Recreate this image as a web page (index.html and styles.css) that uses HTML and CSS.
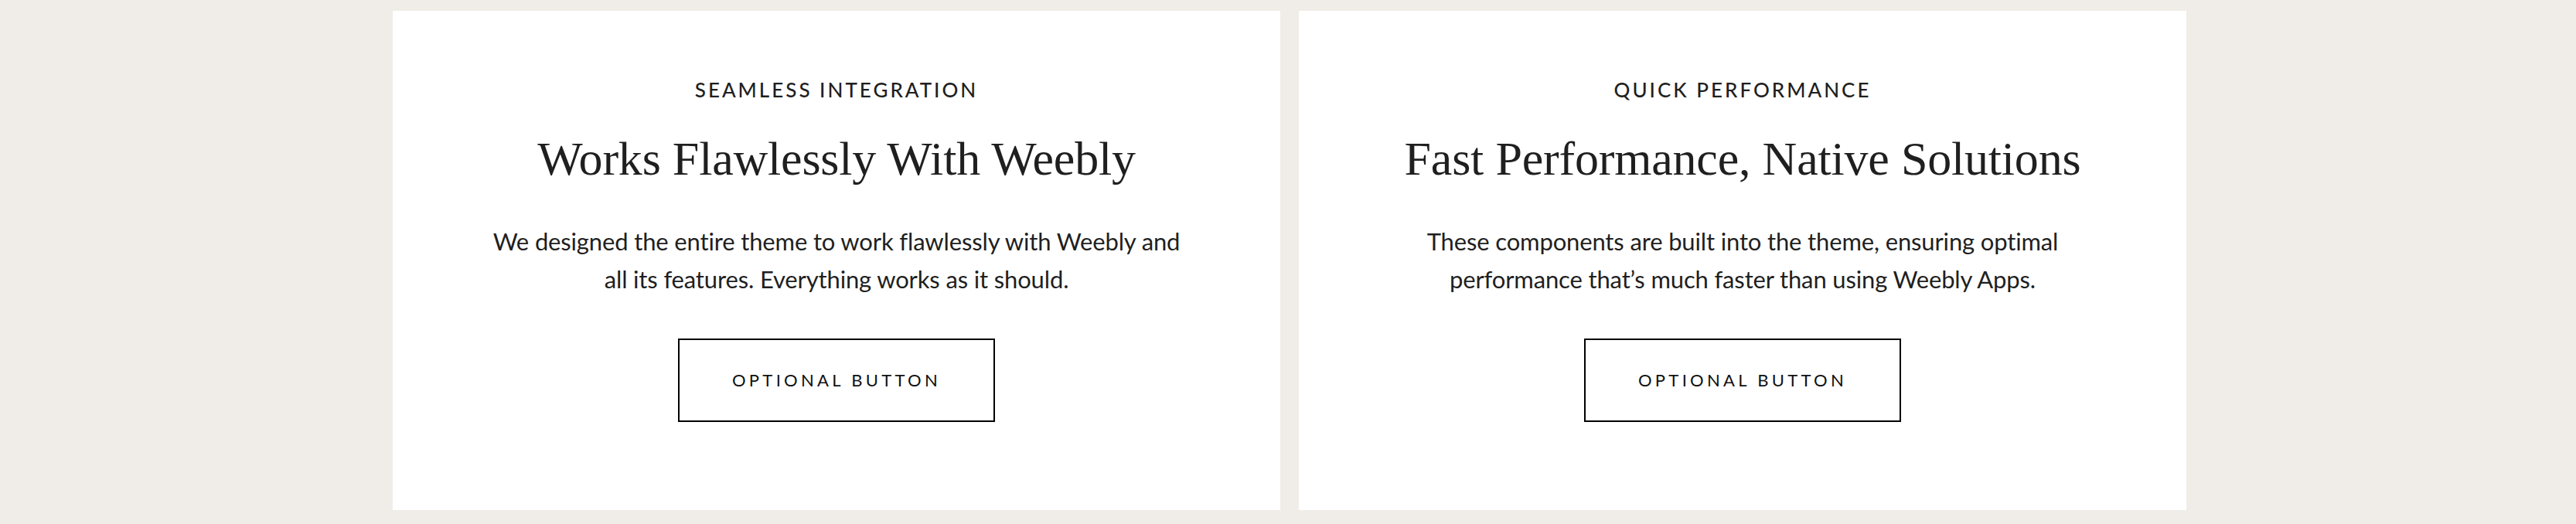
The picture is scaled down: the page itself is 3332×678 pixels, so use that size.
FILE: index.html
```html
<!DOCTYPE html>
<html lang="en">
<head>
<meta charset="utf-8">
<title>Features</title>
<link rel="stylesheet" href="styles.css">
</head>
<body>
<section class="features">
  <article class="card">
    <p class="eyebrow">Seamless Integration</p>
    <h2 class="title">Works Flawlessly With Weebly</h2>
    <p class="text">We designed the entire theme to work flawlessly with Weebly and all its features. Everything works as it should.</p>
    <a class="button" href="#">Optional Button</a>
  </article>
  <article class="card">
    <p class="eyebrow">Quick Performance</p>
    <h2 class="title">Fast Performance, Native Solutions</h2>
    <p class="text">These components are built into the theme, ensuring optimal performance that’s much faster than using Weebly Apps.</p>
    <a class="button" href="#">Optional Button</a>
  </article>
</section>
</body>
</html>
```

FILE: styles.css
```css
html, body {
  margin: 0;
  padding: 0;
}
body {
  background: #f0ede8;
  color: #1f1f1f;
  font-family: Lato, "Open Sans", sans-serif;
}
.features {
  display: flex;
  justify-content: center;
  gap: 24px;
  padding: 14px 0 18px 4px;
}
.card {
  width: 1148px;
  height: 646px;
  box-sizing: border-box;
  background: #fff;
  padding-top: 89px;
  display: flex;
  flex-direction: column;
  align-items: center;
  text-align: center;
}
.eyebrow {
  margin: 0;
  font-size: 26px;
  line-height: 26px;
  font-weight: 500;
  letter-spacing: 3px;
  text-transform: uppercase;
}
.title {
  margin: 39px 0 0;
  font-family: "Liberation Serif", "Times New Roman", serif;
  font-weight: 400;
  font-size: 62px;
  line-height: 74px;
  letter-spacing: -0.2px;
}
.text {
  margin: 46px 0 0;
  max-width: 920px;
  font-size: 31px;
  line-height: 49px;
  font-weight: 400;
  letter-spacing: -0.15px;
}
.button {
  margin-top: 52px;
  width: 410px;
  height: 108px;
  box-sizing: border-box;
  border: 2px solid #000;
  display: flex;
  align-items: center;
  justify-content: center;
  color: #111;
  text-decoration: none;
  text-transform: uppercase;
  font-size: 22px;
  line-height: 22px;
  letter-spacing: 4.3px;
}
```
